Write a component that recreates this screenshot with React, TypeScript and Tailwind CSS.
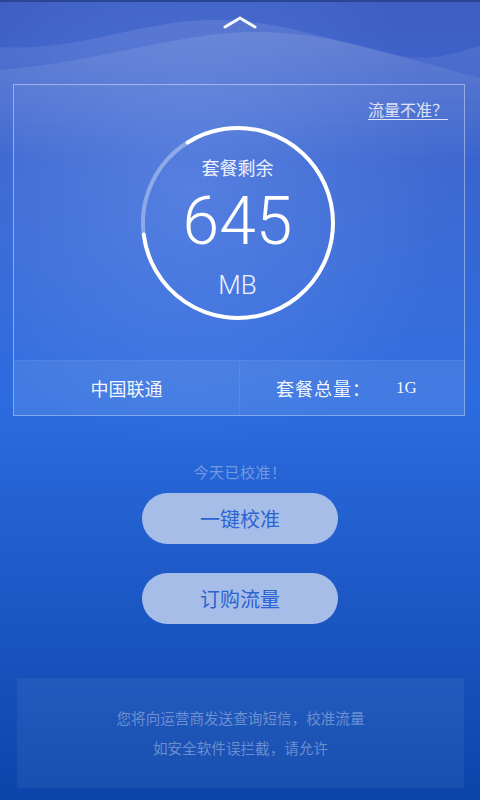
import React from "react";

function Ring() {
  return (
    <svg width="200" height="200" viewBox="0 0 200 200" className="absolute inset-0">
      <path
        d="M5.71 111.58 A95 95 0 0 1 49.66 19.44"
        fill="none"
        stroke="rgba(255,255,255,0.35)"
        strokeWidth="4"
      />
      <path
        d="M49.66 19.44 A95 95 0 1 1 5.71 111.58"
        fill="none"
        stroke="#ffffff"
        strokeWidth="4"
        strokeLinecap="round"
      />
    </svg>
  );
}

function Waves() {
  return (
    <svg className="absolute left-0 top-0" width="480" height="160" viewBox="0 0 480 160">
      <defs>
        <linearGradient id="w1" x1="0" y1="0" x2="0" y2="1">
          <stop offset="0" stopColor="#ffffff" stopOpacity="0.1" />
          <stop offset="1" stopColor="#ffffff" stopOpacity="0" />
        </linearGradient>
        <linearGradient id="w2" x1="0" y1="0" x2="0" y2="1">
          <stop offset="0" stopColor="#ffffff" stopOpacity="0.11" />
          <stop offset="1" stopColor="#ffffff" stopOpacity="0" />
        </linearGradient>
      </defs>
      <rect x="0" y="0" width="480" height="2" fill="#2b4596" />
      <path
        d="M0 47 C80 52 140 20 215 20 C280 20 330 40 395 55 C440 63 460 50 480 46 L480 160 L0 160 Z"
        fill="url(#w1)"
      />
      <path
        d="M0 70 C100 62 180 32 255 32 C330 32 380 52 480 78 L480 160 L0 160 Z"
        fill="url(#w2)"
      />
    </svg>
  );
}

export default function App() {
  return (
    <div className="relative w-[480px] h-[800px] overflow-hidden bg-linear-to-b from-[#3f5fc4] via-[#2c6ce0] via-50% to-[#0b45aa] font-['Noto_Sans_CJK_SC','Noto_Sans',sans-serif]">
      <div className="absolute inset-0 bg-[radial-gradient(ellipse_260px_260px_at_190px_190px,rgba(110,150,240,0.45),rgba(110,150,240,0)_100%)]" />
      <Waves />

      <div className="relative flex flex-col items-center">
        <div className="pt-[15px] h-[28px]">
          <svg width="34" height="14" viewBox="0 0 34 14">
            <polyline
              points="2,12 17,3 32,12"
              fill="none"
              stroke="#ffffff"
              strokeWidth="3"
              strokeLinecap="round"
              strokeLinejoin="round"
              opacity="0.95"
            />
          </svg>
        </div>

        <div className="mt-[56px] w-[452px] ml-[-2px] h-[332px] border border-white/40 bg-white/[0.03] flex flex-col">
          <div className="relative h-[275px] flex justify-center">
            <a className="absolute right-[16px] top-[12px] text-[16px] text-white/80 underline underline-offset-[3px]">
              流量不准？
            </a>
            <div className="relative mt-[38px] w-[200px] h-[200px] mr-[3px]">
              <Ring />
              <div className="absolute inset-0 flex flex-col items-center">
                <div className="mt-[30px] h-[28px] text-[18px] leading-[28px] text-white/90">
                  套餐剩余
                </div>
                <div className="mt-[5px] h-[72px] text-[66px] leading-[72px] text-white font-light font-['Roboto',sans-serif]">
                  645
                </div>
                <div className="mt-[12px] text-[26px] leading-[30px] text-white/90 font-light font-['Roboto',sans-serif]">
                  MB
                </div>
              </div>
            </div>
          </div>
          <div className="flex-1 flex bg-white/[0.08] border-t border-white/[0.06]">
            <div className="w-[226px] flex items-center justify-center border-r border-white/[0.08] text-[18px] text-white/95">
              中国联通
            </div>
            <div className="flex-1 flex items-center text-[18px] text-white/95">
              <span className="ml-[36px] tracking-[1px]">套餐总量：</span>
              <span className="ml-[25px] text-[17px] font-['Liberation_Serif',serif]">1G</span>
            </div>
          </div>
        </div>

        <div className="mt-[45px] text-[15px] leading-[22px] text-white/35 tracking-[0.5px]">
          今天已校准！
        </div>

        <button className="mt-[10px] w-[196px] h-[51px] rounded-full bg-[#a6bde8] text-[20px] text-[#2b63d2] flex items-center justify-center">
          一键校准
        </button>
        <button className="mt-[29px] w-[196px] h-[51px] rounded-full bg-[#a6bde8] text-[20px] text-[#2b63d2] flex items-center justify-center">
          订购流量
        </button>

        <div className="mt-[54px] w-[447px] ml-[1px] h-[110px] bg-white/[0.05] flex flex-col items-center justify-center text-[14.6px] leading-[30px] text-white/35">
          <div>您将向运营商发送查询短信，校准流量</div>
          <div>如安全软件误拦截，请允许</div>
        </div>
      </div>
    </div>
  );
}
